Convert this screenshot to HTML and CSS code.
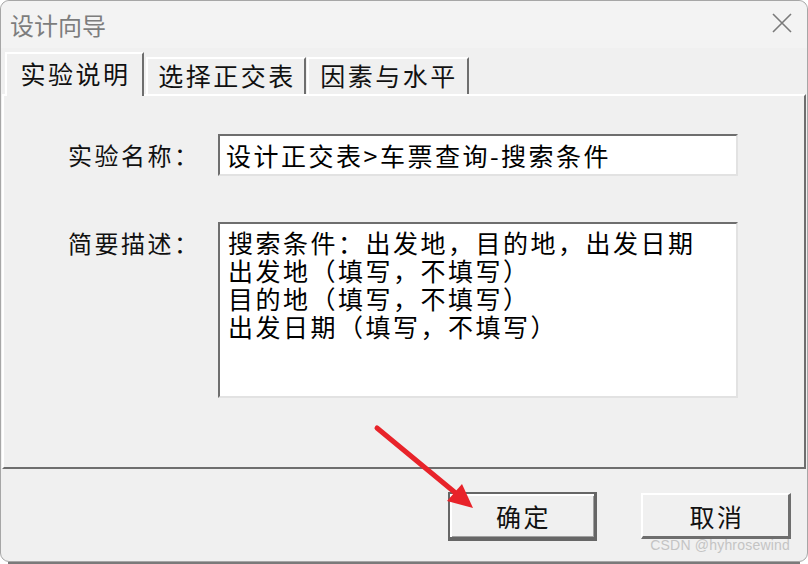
FILE: index.html
```html
<!DOCTYPE html>
<html lang="zh-CN">
<head>
    <meta charset="UTF-8">
    <title>设计向导</title>
    <link rel="stylesheet" href="styles.css">
</head>
<body>
    <div class="window">
        <div class="titlebar">
            <span class="title">设计向导</span>
            <svg class="close" width="22" height="22" viewBox="0 0 22 22">
                <path d="M2 2 L20 20 M20 2 L2 20" stroke="#7a7a7a" stroke-width="1.6" fill="none"/>
            </svg>
        </div>

        <div class="tabs">
            <div class="tab active">实验说明</div>
            <div class="tab tab-2">选择正交表</div>
            <div class="tab tab-3">因素与水平</div>
        </div>

        <div class="panel">
            <div class="form-row">
                <label class="form-label">实验名称：</label>
                <div class="text-input">设计正交表&gt;车票查询-搜索条件</div>
            </div>
            <div class="form-row top">
                <label class="form-label">简要描述：</label>
                <div class="text-area">
                    <div class="line">搜索条件：出发地，目的地，出发日期</div>
                    <div class="line">出发地（填写，不填写）</div>
                    <div class="line">目的地（填写，不填写）</div>
                    <div class="line">出发日期（填写，不填写）</div>
                </div>
            </div>
        </div>

        <div class="buttons">
            <button class="btn btn-default">确定</button>
            <button class="btn">取消</button>
        </div>

        <!-- annotation arrow on top of the dialog -->
        <svg class="arrow" width="808" height="564" viewBox="0 0 808 564">
            <line x1="377" y1="428" x2="458" y2="495" stroke="#e8232a" stroke-width="5" stroke-linecap="round"/>
            <polygon points="473,508 447,501 462,484" fill="#e8232a"/>
        </svg>
        <span class="watermark">CSDN @hyhrosewind</span>
    </div>
    <div class="below"></div>
</body>
</html>
```

FILE: styles.css
```css
body {
    margin: 0;
    background-color: #ffffff;
    font-family: "Noto Sans CJK SC", "Noto Sans", sans-serif;
    overflow: hidden;
}
.window {
    position: relative;
    width: 808px;
    height: 562px;
    box-sizing: border-box;
    border: 1px solid #a6a6a6;
    border-radius: 9px;
    background-color: #f0f0f0;
    display: flex;
    flex-direction: column;
}
.below {
    height: 2px;
    margin: 0 8px;
    background-color: #7a7a7a;
}
.titlebar {
    height: 47px;
    display: flex;
    align-items: center;
    justify-content: space-between;
    padding: 0 14px 0 9px;
    background-color: #f3f3f3;
    border-radius: 9px 9px 0 0;
}
.title {
    font-size: 24px;
    color: #7d7d7d;
    margin-top: -1px;
}
.close {
    margin-top: -3px;
}
.tabs {
    height: 46px;
    display: flex;
    align-items: flex-end;
    padding-left: 4px;
    position: relative;
    z-index: 1;
}
.tab {
    box-sizing: border-box;
    height: 37px;
    border-top: 2px solid #ffffff;
    border-left: 2px solid #ffffff;
    border-right: 2px solid #6e6e6e;
    background-color: #f0f0f0;
    font-size: 25px;
    letter-spacing: 2.5px;
    color: #111;
    line-height: 33px;
    text-align: center;
    padding-left: 2px;
}
.tab.active {
    width: 139px;
    height: 44px;
    line-height: 39px;
    margin-bottom: -2px;
}
.tab-2 {
    width: 160px;
    margin-left: 2px;
}
.tab-3 {
    width: 162px;
    margin-left: 1px;
}
.panel {
    height: 375px;
    box-sizing: border-box;
    margin: 0 1px;
    border-top: 2px solid #ffffff;
    border-left: 2px solid #ffffff;
    border-right: 2px solid #6e6e6e;
    border-bottom: 2px solid #6e6e6e;
    padding: 38px 0 0 64px;
    display: flex;
    flex-direction: column;
    gap: 46px;
}
.form-row {
    display: flex;
    align-items: center;
}
.form-row.top {
    align-items: flex-start;
}
.form-label {
    width: 150px;
    font-size: 24px;
    letter-spacing: 2.5px;
    color: #111;
    line-height: 28px;
}
.form-row.top .form-label {
    padding-top: 7px;
}
.text-input, .text-area {
    box-sizing: border-box;
    width: 520px;
    background-color: #ffffff;
    border-top: 2px solid #6e6e6e;
    border-left: 2px solid #6e6e6e;
    border-right: 2px solid #e2e2e2;
    border-bottom: 2px solid #e2e2e2;
    font-size: 25px;
    letter-spacing: 2.5px;
    color: #000;
}
.text-input {
    height: 42px;
    line-height: 38px;
    padding-left: 6px;
}
.text-area {
    height: 176px;
    line-height: 28px;
    padding: 4px 0 0 8px;
}
.text-area .line {
    height: 28px;
}
.buttons {
    flex: 1;
    display: flex;
    justify-content: flex-end;
    align-items: flex-start;
    gap: 44px;
    padding: 23px 16px 0 0;
}
.btn {
    box-sizing: border-box;
    width: 150px;
    height: 46px;
    margin-top: 1px;
    background-color: #f0f0f0;
    border-top: 2px solid #ffffff;
    border-left: 2px solid #ffffff;
    border-right: 3px solid #6e6e6e;
    border-bottom: 3px solid #6e6e6e;
    font-family: "Noto Sans CJK SC", sans-serif;
    font-size: 25px;
    letter-spacing: 2.5px;
    color: #111;
    padding: 0 0 0 3px;
}
.btn-default {
    width: 149px;
    height: 49px;
    margin-top: 0;
    border: 2px solid #666666;
    border-bottom-width: 4px;
    border-right-width: 3px;
    box-shadow: inset 2px 2px #ffffff, inset -1px -1px #a0a0a0;
}
.arrow {
    position: absolute;
    left: -1px;
    top: -1px;
    pointer-events: none;
}
.watermark {
    position: absolute;
    right: 17px;
    bottom: 8px;
    font-family: "Liberation Sans", sans-serif;
    font-size: 14px;
    letter-spacing: 0.2px;
    color: #c4c4c4;
}
```
